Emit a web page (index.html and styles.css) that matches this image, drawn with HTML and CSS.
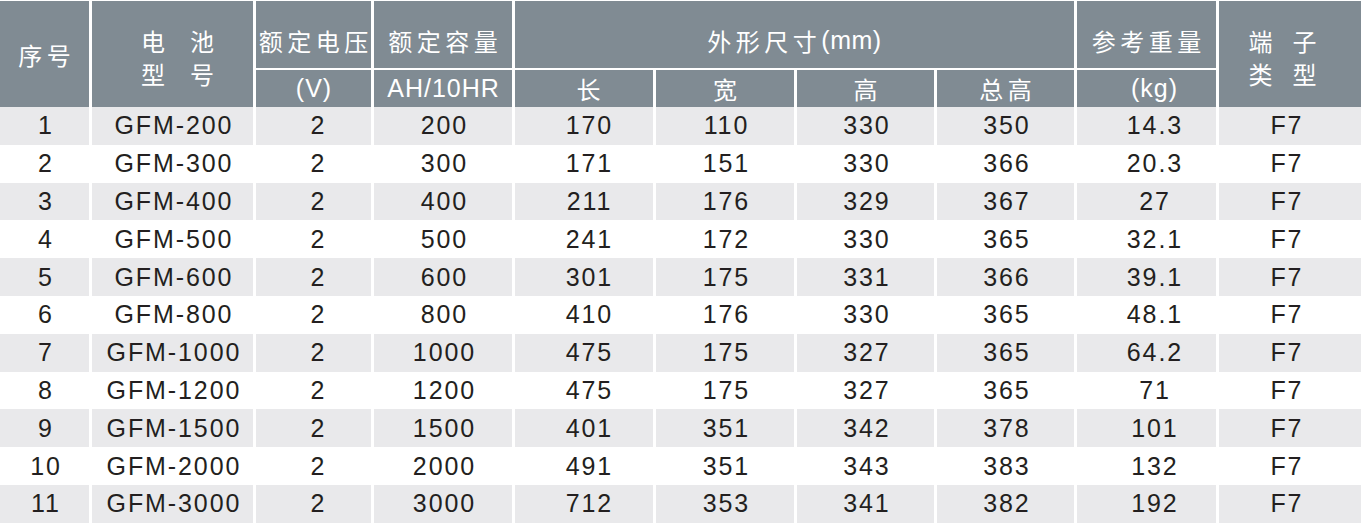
FILE: index.html
```html
<!DOCTYPE html>
<html lang="zh">
<head>
<meta charset="utf-8">
<title>GFM 电池参数表</title>
<link rel="stylesheet" href="styles.css">
</head>
<body>
<div class="sheet">
  <div class="head">
    <div class="hc c1 span2"><span class="cjk">序号</span></div>
    <div class="hc c2 span2 stack">
      <div class="pair wide"><span>电</span><span>池</span></div>
      <div class="pair wide"><span>型</span><span>号</span></div>
    </div>
    <div class="hc c3 r1"><span class="cjk">额定电压</span></div>
    <div class="hc c3 r2"><span class="lat">(V)</span></div>
    <div class="hc c4 r1"><span class="cjk">额定容量</span></div>
    <div class="hc c4 r2"><span class="lat">AH/10HR</span></div>
    <div class="hc dims r1"><span class="cjk">外形尺寸</span><span class="lat mm">(mm)</span></div>
    <div class="hc c5 r2"><span class="cjk">长</span></div>
    <div class="hc c6 r2"><span class="cjk">宽</span></div>
    <div class="hc c7 r2"><span class="cjk">高</span></div>
    <div class="hc c8 r2"><span class="cjk">总高</span></div>
    <div class="hc c9 r1"><span class="cjk">参考重量</span></div>
    <div class="hc c9 r2"><span class="lat">(kg)</span></div>
    <div class="hc c10 span2 stack">
      <div class="pair"><span>端</span><span>子</span></div>
      <div class="pair"><span>类</span><span>型</span></div>
    </div>
  </div>

  <div class="row alt"><div>1</div><div>GFM-200</div><div>2</div><div>200</div><div>170</div><div>110</div><div>330</div><div>350</div><div>14.3</div><div>F7</div></div>
  <div class="row"><div>2</div><div>GFM-300</div><div>2</div><div>300</div><div>171</div><div>151</div><div>330</div><div>366</div><div>20.3</div><div>F7</div></div>
  <div class="row alt"><div>3</div><div>GFM-400</div><div>2</div><div>400</div><div>211</div><div>176</div><div>329</div><div>367</div><div>27</div><div>F7</div></div>
  <div class="row"><div>4</div><div>GFM-500</div><div>2</div><div>500</div><div>241</div><div>172</div><div>330</div><div>365</div><div>32.1</div><div>F7</div></div>
  <div class="row alt"><div>5</div><div>GFM-600</div><div>2</div><div>600</div><div>301</div><div>175</div><div>331</div><div>366</div><div>39.1</div><div>F7</div></div>
  <div class="row"><div>6</div><div>GFM-800</div><div>2</div><div>800</div><div>410</div><div>176</div><div>330</div><div>365</div><div>48.1</div><div>F7</div></div>
  <div class="row alt"><div>7</div><div>GFM-1000</div><div>2</div><div>1000</div><div>475</div><div>175</div><div>327</div><div>365</div><div>64.2</div><div>F7</div></div>
  <div class="row"><div>8</div><div>GFM-1200</div><div>2</div><div>1200</div><div>475</div><div>175</div><div>327</div><div>365</div><div>71</div><div>F7</div></div>
  <div class="row alt"><div>9</div><div>GFM-1500</div><div>2</div><div>1500</div><div>401</div><div>351</div><div>342</div><div>378</div><div>101</div><div>F7</div></div>
  <div class="row"><div>10</div><div>GFM-2000</div><div>2</div><div>2000</div><div>491</div><div>351</div><div>343</div><div>383</div><div>132</div><div>F7</div></div>
  <div class="row alt"><div>11</div><div>GFM-3000</div><div>2</div><div>3000</div><div>712</div><div>353</div><div>341</div><div>382</div><div>192</div><div>F7</div></div>
</div>
</body>
</html>
```

FILE: styles.css
```css
html, body {
  margin: 0;
  padding: 0;
  background: #ffffff;
}

body {
  padding-top: 1px;
  font-family: "Liberation Sans", "Noto Sans CJK SC", sans-serif;
}

.sheet {
  width: 1361px;
  display: flex;
  flex-direction: column;
}

.head,
.row {
  display: grid;
  grid-template-columns: 89px 161px 115px 138px 138px 138px 137px 137px 139px 142px;
  column-gap: 3px;
}

.head {
  grid-template-rows: 67px 37px;
  row-gap: 2px;
}

.hc {
  background: #808b93;
  color: #ffffff;
  display: flex;
  align-items: center;
  justify-content: center;
  white-space: nowrap;
  font-size: 24px;
}

.hc.r1 {
  grid-row: 1;
  padding-top: 11px;
}

.hc.r2 {
  grid-row: 2;
}

.hc.span2 {
  grid-row: 1 / span 2;
}

.c1 { grid-column: 1; }
.c2 { grid-column: 2; }
.c3 { grid-column: 3; }
.c4 { grid-column: 4; }
.c5 { grid-column: 5; }
.c6 { grid-column: 6; }
.c7 { grid-column: 7; }
.c8 { grid-column: 8; }
.c9 { grid-column: 9; }
.c10 { grid-column: 10; }
.dims { grid-column: 5 / span 4; }

.hc.c5.r2 { padding-left: 9px; }
.hc.c9.r2 { padding-left: 15px; }

.cjk {
  font-family: "Noto Sans CJK SC", sans-serif;
  font-size: 24px;
  letter-spacing: 4.5px;
  padding-left: 4.5px;
}

.lat {
  font-family: "Liberation Sans", sans-serif;
  font-size: 25px;
  letter-spacing: 1px;
  padding-left: 1px;
}

.lat.mm {
  padding-left: 0;
  letter-spacing: 0.5px;
}

.dims .cjk {
  padding-left: 0;
}

.stack {
  flex-direction: column;
  padding-top: 5px;
}

.c2.stack {
  padding-left: 10px;
}

.c10.stack {
  padding-right: 15px;
}

.pair {
  display: flex;
  gap: 20px;
  font-family: "Noto Sans CJK SC", sans-serif;
  font-size: 24px;
  line-height: 33px;
}

.pair.wide {
  gap: 25px;
}

.row {
  height: 37.8px;
}

.row > div {
  display: flex;
  align-items: center;
  justify-content: center;
  font-size: 25px;
  letter-spacing: 1.9px;
  padding-left: 2.9px;
  color: #231f20;
  white-space: nowrap;
}

.row > div:nth-child(3) { padding-left: 9.9px; }
.row > div:nth-child(5) { padding-left: 10.9px; }
.row > div:nth-child(9) { padding-left: 16.9px; }
.row > div:nth-child(10) { padding-left: 0; padding-right: 6.1px; }

.row.alt > div {
  background: #e9e9eb;
}
```
